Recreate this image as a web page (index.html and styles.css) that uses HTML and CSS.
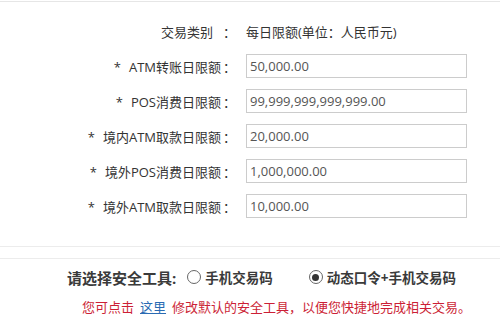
FILE: index.html
```html
<!DOCTYPE html>
<html lang="zh-CN">
<head>
  <meta charset="UTF-8">
  <title>交易限额设置</title>
  <link rel="stylesheet" href="styles.css">
</head>
<body>
  <div class="page">
    <!-- 限额表单 -->
    <div class="limit-form">
      <div class="row">
        <span class="label label-head">交易类别</span>
        <span class="colon">：</span>
        <span class="value">每日限额(单位：人民币元)</span>
      </div>
      <div class="row">
        <span class="label"><span class="star">*</span>ATM转账日限额</span>
        <span class="colon">：</span>
        <input class="amount" type="text" value="50,000.00">
      </div>
      <div class="row">
        <span class="label"><span class="star">*</span>POS消费日限额</span>
        <span class="colon">：</span>
        <input class="amount" type="text" value="99,999,999,999,999.00">
      </div>
      <div class="row">
        <span class="label"><span class="star">*</span>境内ATM取款日限额</span>
        <span class="colon">：</span>
        <input class="amount" type="text" value="20,000.00">
      </div>
      <div class="row">
        <span class="label"><span class="star">*</span>境外POS消费日限额</span>
        <span class="colon">：</span>
        <input class="amount" type="text" value="1,000,000.00">
      </div>
      <div class="row">
        <span class="label"><span class="star">*</span>境外ATM取款日限额</span>
        <span class="colon">：</span>
        <input class="amount" type="text" value="10,000.00">
      </div>
    </div>

    <div class="spacer"></div>

    <!-- 安全工具 -->
    <div class="tools">
      <div class="tool-row">
        <span class="tool-title">请选择安全工具:</span>
        <label class="option"><span class="radio"></span>手机交易码</label>
        <label class="option option-on"><span class="radio"></span>动态口令+手机交易码</label>
      </div>
      <p class="tip">您可点击<a href="#" class="tip-link">这里</a>修改默认的安全工具，以便您快捷地完成相关交易。</p>
    </div>
  </div>
</body>
</html>
```

FILE: styles.css
```css
/* General */
body {
  margin: 0;
  padding: 0;
  background-color: #ffffff;
  font-family: "Open Sans", "Noto Sans CJK SC", sans-serif;
  color: #333333;
}
a {
  color: inherit;
}
.page {
  margin-top: 1px;
  border-top: 1px solid #e6e6e6;
}
/* Formulario de límites */
.limit-form {
  padding: 17px 0 28px;
  border-bottom: 1px solid #ececec;
  display: flex;
  flex-direction: column;
  gap: 11px;
}
.row {
  display: grid;
  grid-template-columns: 221px 25px 221px;
  align-items: center;
  height: 24px;
  font-size: 13px;
}
.label {
  text-align: right;
  white-space: nowrap;
}
.label-head {
  padding-right: 8px;
}
.star {
  margin-right: 8px;
}
.colon {
  padding-left: 2px;
}
.value {
  white-space: nowrap;
}
.amount {
  box-sizing: border-box;
  width: 221px;
  height: 24px;
  margin: 0;
  padding: 0 3px;
  border: 1px solid #cccccc;
  font-family: inherit;
  font-size: 13px;
  color: #555555;
  outline: none;
}
.spacer {
  height: 11px;
}
/* Herramientas de seguridad */
.tools {
  border-top: 1px solid #ececec;
  padding-top: 8px;
}
.tool-row {
  display: flex;
  align-items: center;
  height: 20px;
  padding-left: 67px;
  font-weight: bold;
  color: #3a3a3a;
}
.tool-title {
  font-size: 15px;
  margin-right: 11px;
}
.option {
  display: flex;
  align-items: center;
  font-size: 13.5px;
  margin-right: 36px;
}
.radio {
  box-sizing: border-box;
  width: 14px;
  height: 14px;
  border: 1px solid #666666;
  border-radius: 50%;
  margin-right: 4px;
  display: flex;
  align-items: center;
  justify-content: center;
}
.option-on .radio::after {
  content: "";
  width: 7px;
  height: 7px;
  border-radius: 50%;
  background-color: #333333;
}
.tip {
  margin: 11px 0 0;
  padding-left: 82px;
  font-size: 13px;
  line-height: 18px;
  color: #cc1f36;
  white-space: nowrap;
}
.tip-link {
  color: #2a6bb3;
  margin: 0 6px;
}
```
